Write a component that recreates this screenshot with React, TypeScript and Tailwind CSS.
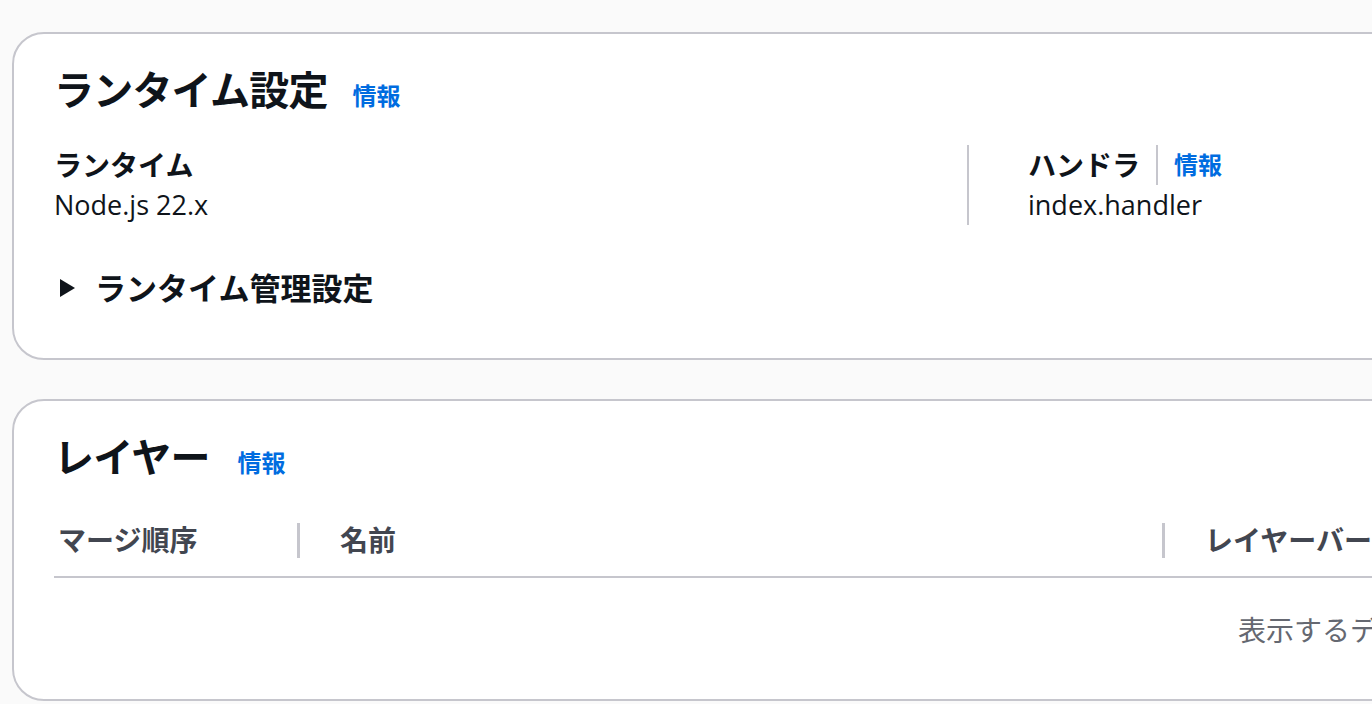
import React from 'react'

function InfoLink() {
  return (
    <a className="text-[24px] font-bold leading-[32px] text-[#006ce0] cursor-pointer">情報</a>
  )
}

function CaretRight() {
  return (
    <svg width="15" height="18" viewBox="0 0 15 18" className="shrink-0">
      <polygon points="0,0 15,9 0,18" fill="#0f141a" />
    </svg>
  )
}

export default function App() {
  return (
    <div className="h-screen w-screen overflow-hidden bg-[#fafafa] text-[#0f141a] font-['Open_Sans','Noto_Sans_CJK_JP',sans-serif]">
      <div className="flex w-[2900px] flex-col gap-[39px] pl-[12px] pt-[32px]">
        {/* Runtime settings */}
        <div className="rounded-[32px] border-2 border-[#c6c6cd] bg-white px-[40px] pb-[50px] pt-[32px]">
          <div className="flex items-baseline">
            <h2 className="text-[40px] font-bold leading-[48px] tracking-[-0.02em]">ランタイム設定</h2>
            <span className="ml-[25px]">
              <InfoLink />
            </span>
          </div>

          <div className="mt-[31px] flex">
            <div className="w-[913px]">
              <div className="text-[28px] font-bold leading-[40px]">ランタイム</div>
              <div className="text-[27px] leading-[40px]">Node.js 22.x</div>
            </div>
            <div className="border-l-2 border-[#c6c6cd] pl-[59px]">
              <div className="flex items-stretch">
                <span className="text-[28px] font-bold leading-[40px]">ハンドラ</span>
                <span className="mx-[16px] w-[2px] bg-[#c6c6cd]" />
                <span className="flex items-center">
                  <InfoLink />
                </span>
              </div>
              <div className="text-[27px] leading-[40px]">index.handler</div>
            </div>
          </div>

          <div className="mt-[43px] flex items-center gap-[20px] pl-[6px]">
            <CaretRight />
            <span className="text-[31px] font-bold leading-[40px]">ランタイム管理設定</span>
          </div>
        </div>

        {/* Layers */}
        <div className="rounded-[32px] border-2 border-[#c6c6cd] bg-white px-[40px] pb-[49px] pt-[32px]">
          <div className="flex items-baseline">
            <h2 className="text-[40px] font-bold leading-[48px] tracking-[-0.02em]">レイヤー</h2>
            <span className="ml-[28px]">
              <InfoLink />
            </span>
          </div>

          <div className="mt-[22px]">
            <div className="flex items-center border-b-2 border-[#c6c6cd] pb-[16px] pt-[17px] text-[28px] font-bold leading-[40px] text-[#424650]">
              <div className="w-[243px] pl-[4px]">マージ順序</div>
              <div className="h-[35px] w-[3px] bg-[#c6c6cd]" />
              <div className="w-[862px] pl-[40px]">名前</div>
              <div className="h-[35px] w-[3px] bg-[#c6c6cd]" />
              <div className="pl-[40px]">レイヤーバージョン ARN</div>
            </div>
            <div className="pl-[1184px] pt-[32px] text-[28px] leading-[40px] text-[#656871]">
              表示するデータがありません
            </div>
          </div>
        </div>
      </div>
    </div>
  )
}
